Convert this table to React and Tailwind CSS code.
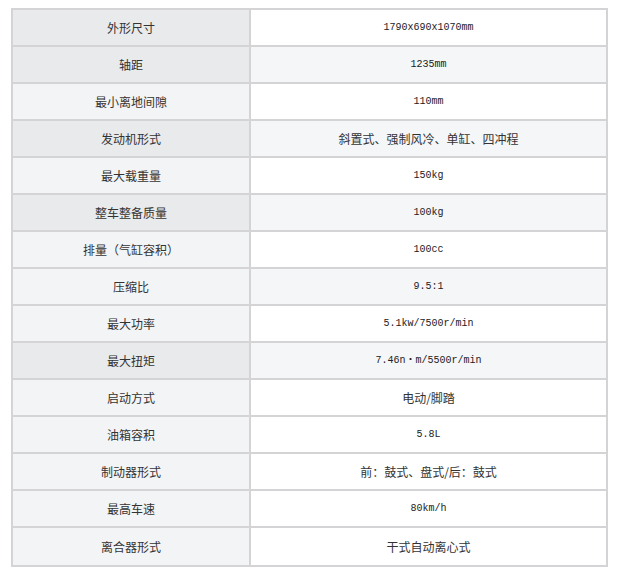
import React from "react";

const specs = [
  { label: "外形尺寸", value: "1790x690x1070mm", mono: true, dark: true },
  { label: "轴距", value: "1235mm", mono: true, dark: true, alt: true },
  { label: "最小离地间隙", value: "110mm", mono: true },
  { label: "发动机形式", value: "斜置式、强制风冷、单缸、四冲程", dark: true, alt: true },
  { label: "最大载重量", value: "150kg", mono: true },
  { label: "整车整备质量", value: "100kg", mono: true, dark: true, alt: true },
  { label: "排量（气缸容积）", value: "100cc", mono: true },
  { label: "压缩比", value: "9.5:1", mono: true, alt: true },
  { label: "最大功率", value: "5.1kw/7500r/min", mono: true },
  { label: "最大扭矩", value: "7.46n・m/5500r/min", mono: true, dark: true, alt: true },
  { label: "启动方式", value: "电动/脚踏" },
  { label: "油箱容积", value: "5.8L", mono: true },
  { label: "制动器形式", value: "前：鼓式、盘式/后：鼓式" },
  { label: "最高车速", value: "80km/h", mono: true },
  { label: "离合器形式", value: "干式自动离心式" },
];

const cjk = "font-['Noto_Sans_CJK_SC',sans-serif] text-[12px]";
const mono = "font-['Liberation_Mono','Noto_Sans_CJK_SC',monospace] text-[10px] text-[#222]";

export default function App() {
  return (
    <div className="min-h-[576px] bg-white pt-2 pl-[11px]">
      <div className="w-[597px] border-2 border-[#d4d4d6] text-[#333]">
        {specs.map((row, i) => (
          <div
            key={row.label}
            className={`flex h-[37px] ${i === specs.length - 1 ? "h-[35px]" : "border-b-2 border-[#d4d4d6]"}`}
          >
            <div
              className={`flex w-[238px] items-center justify-center border-r-2 border-[#d4d4d6] ${cjk} ${row.dark ? "bg-[#e9eaec]" : "bg-[#f3f4f6]"}`}
            >
              {row.label}
            </div>
            <div
              className={`flex flex-1 items-center justify-center ${row.mono ? mono : cjk} ${row.alt ? "bg-[#f5f6f8]" : "bg-white"}`}
            >
              {row.value}
            </div>
          </div>
        ))}
      </div>
    </div>
  );
}
